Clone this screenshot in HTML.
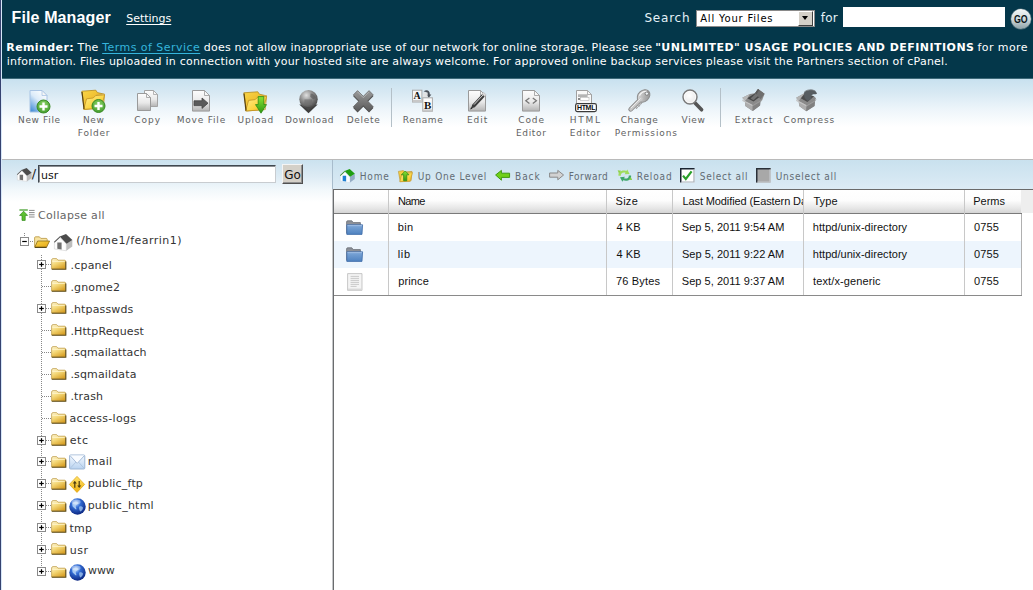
<!DOCTYPE html>
<html>
<head>
<meta charset="utf-8">
<title>File Manager</title>
<style>
html,body{margin:0;padding:0;}
body{width:1033px;height:590px;overflow:hidden;position:relative;background:#fff;font-family:"DejaVu Sans","Liberation Sans",sans-serif;font-size:11px;color:#555;}
.abs{position:absolute;}
.t{position:absolute;white-space:nowrap;line-height:14px;}
.ico{position:absolute;overflow:visible;}
#hdr{left:0;top:0;width:1033px;height:78px;background:#04374a;}
#hdr2{left:0;top:78px;width:1033px;height:1px;background:#3c6878;}
#lb0{left:0;top:0;width:1px;height:590px;background:#364370;}
#lb1{left:1px;top:0;width:1px;height:590px;background:#d6e6f8;}
.title{font-family:"Liberation Sans",sans-serif;font-weight:bold;font-size:16px;color:#fff;line-height:20px;}
.wh{color:#fff;}
.wh a{color:#35b5dc;text-decoration:underline;text-underline-offset:1.500px;}
.wh u{text-underline-offset:2px;}
.s12{font-size:12px;color:#e4f2f8;}
#sel{left:696px;top:10px;width:119px;height:17px;background:#fff;border:1px solid #8a8a8a;box-sizing:border-box;}
#selb{left:798px;top:11px;width:15px;height:15px;background:#d4d0c8;border:1px solid #fff;border-right-color:#404040;border-bottom-color:#404040;box-sizing:border-box;}
#selb:after{content:"";position:absolute;left:3px;top:4px;border:3.500px solid transparent;border-top:4px solid #000;border-bottom:none;}
.selt{font-size:10px;color:#000;}
#sinput{left:843px;top:7px;width:162px;height:20px;background:#fff;}
#gobtn{left:1010.500px;top:9px;width:20px;height:20px;border-radius:10px;background:linear-gradient(#f4f7f7 0%,#cfdadc 50%,#8ea3a9 100%);box-shadow:0 0 0 0.500px #5a7680;}
.go{font-family:"Liberation Sans",sans-serif;font-weight:bold;font-size:11px;color:#0a1418;}
#tb{left:2px;top:79px;width:1031px;height:80px;background:linear-gradient(#c8e1ef 0px,#d8e9f3 14px,#edf5fa 30px,#fff 48px);}
#hline{left:2px;top:159px;width:1031px;height:1px;background:#bababa;}
.tl{font-size:9px;color:#626262;text-align:center;line-height:13px;}
.sep{position:absolute;top:88px;width:1px;height:39px;background:#b4c0c8;}
#lp{left:2px;top:160px;width:331px;height:430px;background:linear-gradient(#cbe2ef 0px,#ddebf4 16px,#f2f8fb 30px,#fff 42px);}
#rp{left:333px;top:160px;width:700px;height:29px;background:linear-gradient(#c9e1ee,#dcebf5);}
.al{font-family:"DejaVu Sans Condensed","DejaVu Sans",sans-serif;font-size:10px;color:#626c74;}
.tr{font-size:11px;color:#333;}
.gr{font-size:11px;color:#666;}
.ar{font-family:"Liberation Sans",sans-serif;font-size:11px;color:#111;}
#pin{left:38px;top:165px;width:238px;height:18px;background:#fff;box-sizing:border-box;border:1px solid #404850;border-right-color:#c8ccd0;border-bottom-color:#c8ccd0;box-shadow:inset 1px 1px 0 #8a8e92;}
#gob{left:282px;top:164px;width:21px;height:20px;background:#d4d0c8;box-sizing:border-box;border:1px solid #f4f4f4;border-right-color:#505050;border-bottom-color:#505050;box-shadow:inset -1px -1px 0 #909090;}
.dotv{position:absolute;width:1px;background-image:linear-gradient(#888 50%,transparent 50%);background-size:1px 2px;}
.doth{position:absolute;height:1px;background-image:linear-gradient(90deg,#888 50%,transparent 50%);background-size:2px 1px;}
</style>
</head>
<body>
<svg width="0" height="0" style="position:absolute"><defs>
<linearGradient id="gPage" x1="0" y1="0" x2="0" y2="1"><stop offset="0" stop-color="#fdfdfd"/><stop offset="0.55" stop-color="#e9e9e9"/><stop offset="1" stop-color="#b4b4b4"/></linearGradient>
<linearGradient id="gBluePage" x1="0.8" y1="0" x2="0.1" y2="1"><stop offset="0" stop-color="#ffffff"/><stop offset="0.45" stop-color="#dcebf9"/><stop offset="1" stop-color="#3f8ad6"/></linearGradient>
<linearGradient id="gFold" x1="0.100" y1="0" x2="0.700" y2="1"><stop offset="0" stop-color="#fdf4cf"/><stop offset="0.450" stop-color="#f4d878"/><stop offset="1" stop-color="#d79f25"/></linearGradient>
<linearGradient id="gFoldB" x1="0" y1="0" x2="1" y2="1"><stop offset="0" stop-color="#f9d648"/><stop offset="1" stop-color="#e6a616"/></linearGradient>
<linearGradient id="gFoldF" x1="0" y1="0" x2="1" y2="1"><stop offset="0" stop-color="#ffee90"/><stop offset="0.600" stop-color="#fbd440"/><stop offset="1" stop-color="#f0b428"/></linearGradient>
<radialGradient id="gGreen" cx="0.5" cy="0.35" r="0.7"><stop offset="0" stop-color="#8fd46a"/><stop offset="1" stop-color="#3d9a28"/></radialGradient>
<linearGradient id="gArrG" x1="0" y1="0" x2="0" y2="1"><stop offset="0" stop-color="#8ae234"/><stop offset="1" stop-color="#2f9a12"/></linearGradient>
<radialGradient id="gSph" cx="0.38" cy="0.28" r="0.8"><stop offset="0" stop-color="#e0e0e0"/><stop offset="0.45" stop-color="#8a8a8a"/><stop offset="1" stop-color="#3c3c3c"/></radialGradient>
<radialGradient id="gGlobe" cx="0.4" cy="0.3" r="0.75"><stop offset="0" stop-color="#c4deff"/><stop offset="0.350" stop-color="#3570d8"/><stop offset="1" stop-color="#08207a"/></radialGradient>
<linearGradient id="gX" x1="0" y1="0" x2="0" y2="1"><stop offset="0" stop-color="#9a9a9a"/><stop offset="1" stop-color="#5a5a5a"/></linearGradient>
<linearGradient id="gKey" x1="0" y1="0" x2="1" y2="1"><stop offset="0" stop-color="#e4e4e4"/><stop offset="1" stop-color="#8c8c8c"/></linearGradient>
<radialGradient id="gLens" cx="0.45" cy="0.4" r="0.7"><stop offset="0" stop-color="#ffffff"/><stop offset="0.7" stop-color="#ececec"/><stop offset="1" stop-color="#c8c8c8"/></radialGradient>
<linearGradient id="gMail" x1="0" y1="0" x2="0" y2="1"><stop offset="0" stop-color="#f4f9ff"/><stop offset="1" stop-color="#b9d3f0"/></linearGradient>
<linearGradient id="gDia" x1="0" y1="0" x2="0" y2="1"><stop offset="0" stop-color="#ffe36a"/><stop offset="1" stop-color="#f0b010"/></linearGradient>
<linearGradient id="gBFold" x1="0" y1="0" x2="0" y2="1"><stop offset="0" stop-color="#7fa8d8"/><stop offset="1" stop-color="#4f82c0"/></linearGradient>
<linearGradient id="gGo" x1="0" y1="0" x2="0" y2="1"><stop offset="0" stop-color="#f2f6f6"/><stop offset="0.5" stop-color="#cdd8da"/><stop offset="1" stop-color="#8fa4aa"/></linearGradient>
</defs></svg>
<div class="abs" id="hdr"></div><div class="abs" id="hdr2"></div>
<div id="title" class="t title" style="left:11.55px;top:8px;letter-spacing:0.117px;">File Manager</div>
<div id="settings" class="t wh" style="left:126.21px;top:12px;letter-spacing:-0.007px;"><u>Settings</u></div>
<div id="searchlbl" class="t s12" style="left:644.4px;top:11px;letter-spacing:0.8px;">Search</div>
<div class="abs" id="sel"></div><div class="abs" id="selb"></div>
<div id="seltxt" class="t selt" style="left:700.18px;top:12px;letter-spacing:0.797px;">All Your Files</div>
<div id="forlbl" class="t s12" style="left:820.8px;top:11px;letter-spacing:0.2px;">for</div>
<div class="abs" id="sinput"></div><div class="abs" id="gobtn"></div>
<div id="gotxt" class="t go" style="left:1013.6px;top:12px;letter-spacing:-0.2px;transform:scaleX(0.8);transform-origin:0 0;">GO</div>
<div id="rem1a" class="t wh" style="left:6.3px;top:41px;letter-spacing:0.395px;"><b>Reminder:</b></div>
<div id="rem1b" class="t wh" style="left:77.61px;top:41px;letter-spacing:0.076px;">The</div>
<div id="rem1c" class="t wh" style="left:102.17px;top:41px;letter-spacing:0.467px;"><a>Terms of Service</a></div>
<div id="rem1d" class="t wh" style="left:203.78px;top:41px;letter-spacing:0.228px;">does not allow inappropriate use of our network for online storage. Please see</div>
<div id="rem1e" class="t wh" style="left:655.16px;top:41px;letter-spacing:0.467px;"><b>"UNLIMITED" USAGE POLICIES AND DEFINITIONS</b></div>
<div id="rem1f" class="t wh" style="left:977.52px;top:41px;letter-spacing:0.417px;">for more</div>
<div id="rem2" class="t wh" style="left:6.77px;top:55px;letter-spacing:0.212px;">information. Files uploaded in connection with your hosted site are always welcome. For approved online backup services please visit the Partners section of cPanel.</div>
<div class="abs" id="tb"></div><div class="abs" id="hline"></div>
<div class="sep" style="left:391px"></div><div class="sep" style="left:720px"></div>
<svg class="ico" style="left:29.4px;top:89.8px" width="24" height="24" viewBox="0 0 24 24"><path d="M1.0 0.5h12l5 5v16.5h-17z" fill="url(#gBluePage)" stroke="#a9c4e4" stroke-width="1"/><path d="M13.0 0.5v5h5z" fill="#f6f6f6" stroke="#a9c4e4" stroke-width="0.8"/><circle cx="14.5" cy="16.5" r="6.5" fill="url(#gGreen)" stroke="#3a8a24" stroke-width="1"/><path d="M10.5 16.5h8M14.5 12.5v8" stroke="#fff" stroke-width="2.4"/></svg>
<div id="tb_newfile_0" class="t tl" style="left:18.03px;top:114px;letter-spacing:0.654px;">New File</div>
<svg class="ico" style="left:80.6px;top:90px" width="26" height="24" viewBox="0 0 26 24"><path d="M0.8 1.2l14 -1l1.6 2.4l7 1.6l-1.4 13.6l-18.6 1.6z" fill="url(#gFoldB)" stroke="#b48a1c" stroke-width="0.8"/><path d="M15 5.2l8.4 -1.2l-1 14l-6 0.6z" fill="#fdf3c4" stroke="#c8a040" stroke-width="0.6"/><path d="M2.6 19.4l3 -10.6l6.6 -0.8l2.4 -2.4l9 -0.8l-3.4 13.4z" fill="url(#gFoldF)" stroke="#c09020" stroke-width="0.8"/><path d="M1 2l2 17" stroke="#5a4410" stroke-width="1.2"/><circle cx="17.5" cy="16" r="6.5" fill="url(#gGreen)" stroke="#3a8a24" stroke-width="1"/><path d="M13.5 16h8M17.5 12v8" stroke="#fff" stroke-width="2.4"/></svg>
<div id="tb_newfolder_0" class="t tl" style="left:83.0px;top:114px;letter-spacing:0.617px;">New</div>
<div id="tb_newfolder_1" class="t tl" style="left:77.86px;top:127px;letter-spacing:0.735px;">Folder</div>
<svg class="ico" style="left:136.8px;top:89.8px" width="22" height="22" viewBox="0 0 22 22"><path d="M7.5 0.5h9l4 4v12h-13z" fill="url(#gPage)" stroke="#a4a4a4" stroke-width="1"/><path d="M16.5 0.5v4h4z" fill="#f6f6f6" stroke="#a4a4a4" stroke-width="0.8"/><path d="M0.5 3.5h9l4 4v13h-13z" fill="url(#gPage)" stroke="#9a9a9a" stroke-width="1"/><path d="M9.5 3.5v4h4z" fill="#f6f6f6" stroke="#9a9a9a" stroke-width="0.8"/></svg>
<div id="tb_copy_0" class="t tl" style="left:134.2px;top:114px;letter-spacing:0.99px;">Copy</div>
<svg class="ico" style="left:191.8px;top:90px" width="19" height="23" viewBox="0 0 19 23"><path d="M0.5 0.5h12l5 5v15.600000000000001h-17z" fill="url(#gPage)" stroke="#9a9a9a" stroke-width="1"/><path d="M12.5 0.5v5h5z" fill="#f6f6f6" stroke="#9a9a9a" stroke-width="0.8"/><path d="M2 10.8h8v-2.8l6 5.2l-6 5.2v-2.8h-8z" fill="#5a5a5a" stroke="#444" stroke-width="0.8"/></svg>
<div id="tb_move_0" class="t tl" style="left:176.68px;top:114px;letter-spacing:0.81px;">Move File</div>
<svg class="ico" style="left:243px;top:90px" width="26" height="24" viewBox="0 -1.6 26 24"><path d="M0.8 1.2l14 -1l1.6 2.4l7 1.6l-1.4 13.6l-18.6 1.6z" fill="url(#gFoldB)" stroke="#b48a1c" stroke-width="0.8"/><path d="M15 5.2l8.4 -1.2l-1 14l-6 0.6z" fill="#fdf3c4" stroke="#c8a040" stroke-width="0.6"/><path d="M2.6 19.4l3 -10.6l6.6 -0.8l2.4 -2.4l9 -0.8l-3.4 13.4z" fill="url(#gFoldF)" stroke="#c09020" stroke-width="0.8"/><path d="M1 2l2 17" stroke="#5a4410" stroke-width="1.2"/><path d="M15.200 5h5.600v8h2.700l-5.500 8.600l-5.500 -8.600h2.700z" fill="url(#gArrG)" stroke="#2c8a14" stroke-width="0.8"/></svg>
<div id="tb_upload_0" class="t tl" style="left:237.61px;top:114px;letter-spacing:0.836px;">Upload</div>
<svg class="ico" style="left:299.2px;top:89.6px" width="19" height="24" viewBox="0 0 19 24"><path d="M0.300 14.600h18.400l-9.200 8.600z" fill="#3e3e3e"/><circle cx="9.500" cy="9.300" r="9.200" fill="url(#gSph)"/><path d="M5.400 9.400h7.600v5.600h-7.600z" fill="#6c6c6c" opacity="0.600"/><path d="M11.600 3.600c2.400 0 4.400 1.600 5.200 4.400l-2.600 1.200l-3 -2.400z" fill="#5c5c5c" opacity="0.700"/><path d="M3.200 14.400c1.800 1.800 4 2.600 6.300 2.600s4.500 -0.800 6.300 -2.600l-6.300 6z" fill="#484848"/></svg>
<div id="tb_download_0" class="t tl" style="left:285.05px;top:114px;letter-spacing:0.515px;">Download</div>
<svg class="ico" style="left:352.6px;top:89.6px" width="21" height="23" viewBox="0 0 20.400 22.400"><path d="M4.400 0.600l5.600 5.600l5.600 -5.600l4.200 4.200l-5.600 5.800l5.600 5.800l-4.200 4.400l-5.600 -5.800l-5.600 5.800l-4.200 -4.400l5.600 -5.800l-5.600 -5.800z" transform="translate(0 1.200)" fill="#4c4c4c"/><path d="M4.400 0.600l5.600 5.600l5.600 -5.600l4.200 4.200l-5.600 5.800l5.600 5.800l-4.200 4.400l-5.600 -5.800l-5.600 5.800l-4.200 -4.400l5.600 -5.800l-5.600 -5.800z" fill="url(#gX)" stroke="#5c5c5c" stroke-width="0.600"/><path d="M4.400 1.800l5.600 5.600l5.600 -5.600" fill="none" stroke="#b4b4b4" stroke-width="0.900"/></svg>
<div id="tb_delete_0" class="t tl" style="left:346.69px;top:114px;letter-spacing:0.691px;">Delete</div>
<svg class="ico" style="left:412.4px;top:89.4px" width="22" height="24" viewBox="0 0 22 24"><rect x="0.5" y="1.2" width="9.4" height="11.8" fill="#f6f6f6" stroke="#a8a8a8"/><path d="M0.5 11h9.4v2h-9.4z" fill="#c8c8c8"/><text x="5.2" y="10.4" font-family="Liberation Serif,serif" font-weight="bold" font-size="10" text-anchor="middle" fill="#111">A</text><path d="M11.6 2.4c3 -2.4 6.6 -1 6.2 3.2l1.6 0l-2.6 3.2l-2.8 -3.2l1.6 0c0.2 -2 -1.6 -3 -4 -3.2z" fill="#4a5058"/><rect x="11" y="3.4" width="4.6" height="5" fill="#e2e2e2" opacity="0.9"/><rect x="10.8" y="8.8" width="9.6" height="13.4" fill="#fbfbfb" stroke="#a8a8a8"/><path d="M10.8 20.4h9.6v1.8h-9.6z" fill="#c8c8c8"/><text x="15.6" y="19.6" font-family="Liberation Serif,serif" font-weight="bold" font-size="11" text-anchor="middle" fill="#111">B</text></svg>
<div id="tb_rename_0" class="t tl" style="left:402.77px;top:114px;letter-spacing:0.62px;">Rename</div>
<svg class="ico" style="left:467.8px;top:90px" width="19" height="23" viewBox="0 0 19 23"><path d="M0.5 0.5h12l5 5v15.600000000000001h-17z" fill="url(#gPage)" stroke="#9a9a9a" stroke-width="1"/><path d="M12.5 0.5v5h5z" fill="#f6f6f6" stroke="#9a9a9a" stroke-width="0.8"/><path d="M3 18.6l1.2 -3.8l10 -10.8l2.6 2.4l-10 10.8z" fill="#3c3c3c"/><path d="M6 14.6l9 -9.6" stroke="#d8d8d8" stroke-width="1"/><path d="M14.2 4l1.4 -1.6l2.6 2.4l-1.4 1.6z" fill="#dcdcdc" stroke="#aaa" stroke-width="0.5"/><path d="M2.2 19.6l0.8 -2.4l1.6 1.4z" fill="#222"/></svg>
<div id="tb_edit_0" class="t tl" style="left:466.99px;top:114px;letter-spacing:0.951px;">Edit</div>
<svg class="ico" style="left:521.8px;top:90px" width="19" height="23" viewBox="0 0 19 23"><path d="M0.5 0.5h12l5 5v15.600000000000001h-17z" fill="url(#gPage)" stroke="#9a9a9a" stroke-width="1"/><path d="M12.5 0.5v5h5z" fill="#f6f6f6" stroke="#9a9a9a" stroke-width="0.8"/><path d="M7.4 8l-3.6 2.8l3.6 2.8M10.8 8l3.6 2.8l-3.6 2.8" fill="none" stroke="#777" stroke-width="1.3"/></svg>
<div id="tb_code_0" class="t tl" style="left:518.32px;top:114px;letter-spacing:0.862px;">Code</div>
<div id="tb_code_1" class="t tl" style="left:515.93px;top:127px;letter-spacing:0.678px;">Editor</div>
<svg class="ico" style="left:575px;top:90px" width="22" height="23" viewBox="0 0 22 23"><path d="M1.5 0.5h11l4 4v12h-15z" fill="#f8f8f8" stroke="#a0a0a0" stroke-width="1"/><path d="M12.5 0.5v4h4z" fill="#f6f6f6" stroke="#a0a0a0" stroke-width="0.8"/><path d="M3 5h9.6M3 6.2h9.6" stroke="#8a8a8a" stroke-width="0.9"/><rect x="3" y="8" width="2" height="2" fill="#888"/><rect x="5.4" y="7.6" width="8.6" height="3" fill="#fff" stroke="#b4b4b4" stroke-width="0.6"/><rect x="0.600" y="13.600" width="20.800" height="8" rx="1.800" fill="#fff" stroke="#3a3a3a" stroke-width="1.200"/><text x="11" y="20.200" font-family="Liberation Sans,sans-serif" font-weight="bold" font-size="7" text-anchor="middle" fill="#0a0a0a" letter-spacing="-0.300">HTML</text></svg>
<div id="tb_html_0" class="t tl" style="left:569.69px;top:114px;letter-spacing:1.723px;">HTML</div>
<div id="tb_html_1" class="t tl" style="left:569.82px;top:127px;letter-spacing:0.762px;">Editor</div>
<svg class="ico" style="left:628.6px;top:89.8px" width="22" height="22" viewBox="0 0 22 22"><path d="M1.600 19.400l10.400 -10.400" stroke="#8c8c8c" stroke-width="4.600" stroke-linecap="round"/><path d="M6.800 16.800l1.400 1.400M9 14.600l1.600 1.600M11 12.600l1.400 1.400" stroke="#8c8c8c" stroke-width="2.200"/><ellipse cx="14.600" cy="6" rx="7" ry="5.400" transform="rotate(-42 14.600 6)" fill="url(#gKey)" stroke="#8a8a8a" stroke-width="1"/><path d="M1.800 19.200l10.400 -10.400" stroke="#c9c9c9" stroke-width="3" stroke-linecap="round"/><path d="M6.800 16.800l1.200 1.200M9 14.600l1.400 1.400M11 12.600l1.200 1.200" stroke="#bcbcbc" stroke-width="1.200"/><path d="M2 18l9.600 -9.600" stroke="#ececec" stroke-width="1"/><path d="M10.400 5.600c1.400 -2.600 4.600 -4.600 7.600 -4.200" fill="none" stroke="#f4f4f4" stroke-width="1.200"/><circle cx="17.800" cy="3.600" r="1.700" fill="#eef2f4" stroke="#7c7c7c" stroke-width="0.900"/></svg>
<div id="tb_chmod_0" class="t tl" style="left:620.72px;top:114px;letter-spacing:0.538px;">Change</div>
<div id="tb_chmod_1" class="t tl" style="left:614.82px;top:127px;letter-spacing:0.897px;">Permissions</div>
<svg class="ico" style="left:682.4px;top:89.4px" width="23" height="23" viewBox="0 0 23 23"><path d="M12.6 13.4l7 7.4" stroke="#555" stroke-width="3.6" stroke-linecap="round"/><circle cx="8" cy="8" r="7" fill="url(#gLens)" stroke="#7a7a7a" stroke-width="1.4"/><circle cx="8" cy="8" r="5.6" fill="none" stroke="#fff" stroke-width="0.8" opacity="0.8"/></svg>
<div id="tb_view_0" class="t tl" style="left:681.5px;top:114px;letter-spacing:0.706px;">View</div>
<svg class="ico" style="left:741.8px;top:89.4px" width="23" height="23" viewBox="0 0 23 23"><path d="M0.300 8.800l7.600 -3.900l5.100 -0.700l3 -4.100l6.600 4.600l-2.500 6.600l-1.800 1l-0.300 4.100l-7.300 5.600l-7.400 -5.100l-0.200 -5.000z" fill="#8a8a8a"/><path d="M5.300 9.300l7.700 -5.100l5.600 3.100l-7.100 5.100z" fill="#474747"/><path d="M13 4.200l3 -4.100l6.600 4.600l-4 5.600z" fill="#6e6e6e"/><path d="M13 4.200l3 -4.100l1.200 0.900l-2.600 4.200z" fill="#595959"/><path d="M8.600 9.600l4.800 -4.800l3 2l-5 4.400z" fill="#777" opacity="0.900"/><path d="M0.300 8.800l7.600 -3.900l-2.600 4.400l-2.300 2.600z" fill="#b9b9b9"/><path d="M3 11.900l7.700 4v6.100l-7.400 -5.100z" fill="#ababab"/><path d="M10.700 15.900l7.900 -4.600l-0.500 5.100l-7.400 5.600z" fill="#828282"/><path d="M0.300 10.400l2.700 1.500l7.700 4l0 1.300l-10.300 -5.300z" fill="#c2c2c2"/><path d="M10.700 15.900l7.900 -4.600l1.600 0.500l-9.500 5.400z" fill="#9a9a9a"/></svg>
<div id="tb_extract_0" class="t tl" style="left:734.81px;top:114px;letter-spacing:0.905px;">Extract</div>
<svg class="ico" style="left:795.9px;top:89.4px" width="22" height="23" viewBox="0 0 22 23"><path d="M0.200 8.800l8.100 -4.600l9.700 3.100l2 2l-1 2l-0.500 5.600l-8.200 5.400l-7.100 -5.400l-0.500 -5z" fill="#8a8a8a"/><path d="M4.700 9.300l4.100 -4.600l9.200 2.600l-6.600 5.600z" fill="#4c4c4c"/><path d="M0.200 8.800l8.100 -4.600l-3.600 5.100l-2 2.600z" fill="#b4b4b4"/><path d="M2.700 11.900l7.900 4.300l-0.300 6.100l-7.100 -5.400z" fill="#adadad"/><path d="M10.600 16.200l8.400 -4.900l-0.500 5.600l-8.200 5.400z" fill="#808080"/><path d="M0.200 10.300l2.500 1.600l7.900 4.300v1.300l-10.400 -5.600z" fill="#c4c4c4"/><path d="M10.600 16.200l8.400 -4.900l1 -1.400l0.400 0.600l-1.400 2l-8.400 5z" fill="#9c9c9c"/><path d="M8.800 9.200c-0.800 -2 -1 -4.200 -0.500 -6.200c1.600 -1.400 3.200 -2 5.100 -2.100c2.400 -0.200 4.600 0.300 6.100 1.300c0.800 0.800 1.300 1.600 1.500 2.500c-1.200 0.500 -2.400 0.600 -3.600 0.500c-0.800 0.200 -1.500 0.600 -2 1.100l0 3.500l-3.800 2.200z" fill="#575d61"/><path d="M8.300 3c1.600 -1.400 3.200 -2 5.100 -2.100c2.400 -0.200 4.600 0.300 6.100 1.300" fill="none" stroke="#7a8084" stroke-width="0.800"/></svg>
<div id="tb_compress_0" class="t tl" style="left:783.62px;top:114px;letter-spacing:0.829px;">Compress</div>
<div class="abs" id="lp"></div>
<div class="abs" id="lb0"></div><div class="abs" id="lb1"></div>
<svg class="ico" style="left:17.4px;top:167.6px" width="14.72" height="13.6" viewBox="0 0 18.400 17"><path d="M5.700 3.300l-5.300 5v6.700l11.900 1.800v-7z" fill="#fdfdfd" stroke="#c8c8c8" stroke-width="0.500"/><path d="M12.400 9.600l5.900 -3.500v6.300l-5.900 4.400z" fill="#bdbdbd"/><path d="M5.700 2.500l6.300 -2.500l6.400 5.900l-5.900 3.800z" fill="#4c4c4c"/><path d="M5.900 2.300l-5.900 5.500l0.500 0.900l5.600 -5.200z" fill="#5a5a5a"/><path d="M3.300 8.400h4.300v7l-4.300 -0.600z" fill="#707070"/></svg>
<div id="slash" class="t tr" style="left:31.8px;top:166px;letter-spacing:0px;font-size:13px;color:#222;line-height:16px;">/</div>
<div class="abs" id="pin"></div><div class="abs" id="gob"></div>
<div id="pintxt" class="t tr" style="left:41px;top:169px;letter-spacing:0px;color:#111;">usr</div>
<div id="gobtxt" class="t tr" style="left:284.3px;top:168px;letter-spacing:0px;color:#111;font-size:12px;">Go</div>
<svg class="ico" style="left:18.6px;top:208.6px" width="16" height="12" viewBox="0 0 16 12"><path d="M0.400 1h8.400" stroke="#3a9a20" stroke-width="1.200"/><path d="M4.600 2.200l4 4.200h-2.400v5h-3.200v-5h-2.400z" fill="#5cc030" stroke="#2f8a18" stroke-width="0.700"/><path d="M10 1.400h5.600M10 3.600h5.600M10 5.800h5.600M10 8h5.600" stroke="#8a8a8a" stroke-width="1"/></svg>
<div id="collapse" class="t gr" style="left:38.05px;top:209px;letter-spacing:0.314px;">Collapse all</div>
<div class="dotv" style="left:24px;top:233px;height:4px"></div>
<div class="doth" style="left:30px;top:241px;width:4px"></div>
<svg class="ico" style="left:20px;top:237px" width="9" height="9" viewBox="0 0 9 9"><rect x="0.500" y="0.500" width="8" height="8" fill="#fff" stroke="#8a8a8a" stroke-width="1"/><path d="M2.200 4.500h4.600" stroke="#000" stroke-width="1.200"/></svg>
<svg class="ico" style="left:33.8px;top:236px" width="16.4" height="12" viewBox="0 0 16.4 12"><path d="M0.600 10.800v-9c0 -0.600 0.400 -1 1 -1h3.800l1.400 1.600h5.400c0.600 0 1 0.400 1 1v2" fill="#f7e3a0" stroke="#b8943c" stroke-width="0.8"/><path d="M0.800 11.200l2.800 -6.200h12l-3 6.200z" fill="url(#gFoldB)" stroke="#8a6a18" stroke-width="0.8"/><path d="M0.800 11.400h11.800" stroke="#4e3e10" stroke-width="1"/></svg>
<svg class="ico" style="left:53.9px;top:233.9px" width="18.4" height="17.0" viewBox="0 0 18.400 17"><path d="M5.700 3.300l-5.300 5v6.700l11.900 1.800v-7z" fill="#fdfdfd" stroke="#c8c8c8" stroke-width="0.500"/><path d="M12.400 9.600l5.900 -3.500v6.300l-5.900 4.400z" fill="#bdbdbd"/><path d="M5.700 2.500l6.300 -2.500l6.400 5.900l-5.900 3.800z" fill="#4c4c4c"/><path d="M5.900 2.300l-5.900 5.500l0.500 0.900l5.600 -5.200z" fill="#5a5a5a"/><path d="M3.300 8.400h4.300v7l-4.300 -0.600z" fill="#707070"/></svg>
<div id="root" class="t tr" style="left:76.33px;top:233.5px;letter-spacing:0.489px;">(/home1/fearrin1)</div>
<div class="dotv" style="left:41px;top:255px;height:316px"></div>
<div class="doth" style="left:42px;top:264px;width:9px"></div>
<svg class="ico" style="left:37px;top:260px" width="9" height="9" viewBox="0 0 9 9"><rect x="0.500" y="0.500" width="8" height="8" fill="#fff" stroke="#8a8a8a" stroke-width="1"/><path d="M2.200 4.500h4.600" stroke="#000" stroke-width="1.200"/><path d="M4.500 2.200v4.600" stroke="#000" stroke-width="1.200"/></svg>
<svg class="ico" style="left:50.6px;top:258px" width="16" height="12" viewBox="0 0 16 12"><path d="M0.6 2.000c0 -0.800 0.600 -1.400 1.400 -1.400h3.600l1.400 1.600h6.600c0.600 0 1 0.400 1 1v7.800h-14z" fill="url(#gFold)" stroke="#b8943c" stroke-width="0.7"/><path d="M0.800 11.200h14v-7.600" fill="none" stroke="#5f4e1c" stroke-width="1.1"/><path d="M1.300 3.400h12.400" stroke="#fff6d0" stroke-width="0.8"/></svg>
<div id="tr0" class="t tr" style="left:70.6px;top:259px;letter-spacing:0.189px;">.cpanel</div>
<div class="doth" style="left:42px;top:286px;width:9px"></div>
<svg class="ico" style="left:50.6px;top:280px" width="16" height="12" viewBox="0 0 16 12"><path d="M0.6 2.000c0 -0.800 0.600 -1.400 1.400 -1.400h3.600l1.400 1.600h6.600c0.600 0 1 0.400 1 1v7.800h-14z" fill="url(#gFold)" stroke="#b8943c" stroke-width="0.7"/><path d="M0.800 11.200h14v-7.600" fill="none" stroke="#5f4e1c" stroke-width="1.1"/><path d="M1.300 3.400h12.400" stroke="#fff6d0" stroke-width="0.8"/></svg>
<div id="tr1" class="t tr" style="left:70.4px;top:281px;letter-spacing:0.151px;">.gnome2</div>
<div class="doth" style="left:42px;top:308px;width:9px"></div>
<svg class="ico" style="left:37px;top:304px" width="9" height="9" viewBox="0 0 9 9"><rect x="0.500" y="0.500" width="8" height="8" fill="#fff" stroke="#8a8a8a" stroke-width="1"/><path d="M2.200 4.500h4.600" stroke="#000" stroke-width="1.200"/><path d="M4.500 2.200v4.600" stroke="#000" stroke-width="1.200"/></svg>
<svg class="ico" style="left:50.6px;top:302px" width="16" height="12" viewBox="0 0 16 12"><path d="M0.6 2.000c0 -0.800 0.600 -1.400 1.400 -1.400h3.600l1.400 1.600h6.600c0.600 0 1 0.400 1 1v7.800h-14z" fill="url(#gFold)" stroke="#b8943c" stroke-width="0.7"/><path d="M0.800 11.200h14v-7.600" fill="none" stroke="#5f4e1c" stroke-width="1.1"/><path d="M1.300 3.400h12.400" stroke="#fff6d0" stroke-width="0.8"/></svg>
<div id="tr2" class="t tr" style="left:70.39px;top:303px;letter-spacing:0.131px;">.htpasswds</div>
<div class="doth" style="left:42px;top:330px;width:9px"></div>
<svg class="ico" style="left:50.6px;top:324px" width="16" height="12" viewBox="0 0 16 12"><path d="M0.6 2.000c0 -0.800 0.600 -1.400 1.400 -1.400h3.600l1.400 1.600h6.600c0.600 0 1 0.400 1 1v7.800h-14z" fill="url(#gFold)" stroke="#b8943c" stroke-width="0.7"/><path d="M0.800 11.200h14v-7.600" fill="none" stroke="#5f4e1c" stroke-width="1.1"/><path d="M1.300 3.400h12.400" stroke="#fff6d0" stroke-width="0.8"/></svg>
<div id="tr3" class="t tr" style="left:70.4px;top:325px;letter-spacing:0.125px;">.HttpRequest</div>
<div class="doth" style="left:42px;top:352px;width:9px"></div>
<svg class="ico" style="left:50.6px;top:346px" width="16" height="12" viewBox="0 0 16 12"><path d="M0.6 2.000c0 -0.800 0.600 -1.400 1.400 -1.400h3.600l1.400 1.600h6.600c0.600 0 1 0.400 1 1v7.800h-14z" fill="url(#gFold)" stroke="#b8943c" stroke-width="0.7"/><path d="M0.800 11.200h14v-7.600" fill="none" stroke="#5f4e1c" stroke-width="1.1"/><path d="M1.300 3.400h12.400" stroke="#fff6d0" stroke-width="0.8"/></svg>
<div id="tr4" class="t tr" style="left:70.6px;top:346px;letter-spacing:0.088px;">.sqmailattach</div>
<div class="doth" style="left:42px;top:374px;width:9px"></div>
<svg class="ico" style="left:50.6px;top:368px" width="16" height="12" viewBox="0 0 16 12"><path d="M0.6 2.000c0 -0.800 0.600 -1.400 1.400 -1.400h3.600l1.400 1.600h6.600c0.600 0 1 0.400 1 1v7.800h-14z" fill="url(#gFold)" stroke="#b8943c" stroke-width="0.7"/><path d="M0.800 11.200h14v-7.600" fill="none" stroke="#5f4e1c" stroke-width="1.1"/><path d="M1.300 3.400h12.400" stroke="#fff6d0" stroke-width="0.8"/></svg>
<div id="tr5" class="t tr" style="left:70.39px;top:368px;letter-spacing:0.151px;">.sqmaildata</div>
<div class="doth" style="left:42px;top:396px;width:9px"></div>
<svg class="ico" style="left:50.6px;top:390px" width="16" height="12" viewBox="0 0 16 12"><path d="M0.6 2.000c0 -0.800 0.600 -1.400 1.400 -1.400h3.600l1.400 1.600h6.600c0.600 0 1 0.400 1 1v7.800h-14z" fill="url(#gFold)" stroke="#b8943c" stroke-width="0.7"/><path d="M0.800 11.200h14v-7.600" fill="none" stroke="#5f4e1c" stroke-width="1.1"/><path d="M1.300 3.400h12.400" stroke="#fff6d0" stroke-width="0.8"/></svg>
<div id="tr6" class="t tr" style="left:70.48px;top:390px;letter-spacing:0.156px;">.trash</div>
<div class="doth" style="left:42px;top:418px;width:9px"></div>
<svg class="ico" style="left:50.6px;top:412px" width="16" height="12" viewBox="0 0 16 12"><path d="M0.6 2.000c0 -0.800 0.600 -1.400 1.400 -1.400h3.600l1.400 1.600h6.600c0.600 0 1 0.400 1 1v7.800h-14z" fill="url(#gFold)" stroke="#b8943c" stroke-width="0.7"/><path d="M0.800 11.200h14v-7.600" fill="none" stroke="#5f4e1c" stroke-width="1.1"/><path d="M1.300 3.400h12.400" stroke="#fff6d0" stroke-width="0.8"/></svg>
<div id="tr7" class="t tr" style="left:69.6px;top:412px;letter-spacing:0.281px;">access-logs</div>
<div class="doth" style="left:42px;top:440px;width:9px"></div>
<svg class="ico" style="left:37px;top:436px" width="9" height="9" viewBox="0 0 9 9"><rect x="0.500" y="0.500" width="8" height="8" fill="#fff" stroke="#8a8a8a" stroke-width="1"/><path d="M2.200 4.500h4.600" stroke="#000" stroke-width="1.200"/><path d="M4.500 2.200v4.600" stroke="#000" stroke-width="1.200"/></svg>
<svg class="ico" style="left:50.6px;top:434px" width="16" height="12" viewBox="0 0 16 12"><path d="M0.6 2.000c0 -0.800 0.600 -1.400 1.400 -1.400h3.600l1.400 1.600h6.600c0.600 0 1 0.400 1 1v7.800h-14z" fill="url(#gFold)" stroke="#b8943c" stroke-width="0.7"/><path d="M0.800 11.200h14v-7.600" fill="none" stroke="#5f4e1c" stroke-width="1.1"/><path d="M1.300 3.400h12.400" stroke="#fff6d0" stroke-width="0.8"/></svg>
<div id="tr8" class="t tr" style="left:69.8px;top:434px;letter-spacing:0.506px;">etc</div>
<div class="doth" style="left:42px;top:461px;width:9px"></div>
<svg class="ico" style="left:37px;top:457px" width="9" height="9" viewBox="0 0 9 9"><rect x="0.500" y="0.500" width="8" height="8" fill="#fff" stroke="#8a8a8a" stroke-width="1"/><path d="M2.200 4.500h4.600" stroke="#000" stroke-width="1.200"/><path d="M4.500 2.200v4.600" stroke="#000" stroke-width="1.200"/></svg>
<svg class="ico" style="left:50.6px;top:456px" width="16" height="12" viewBox="0 0 16 12"><path d="M0.6 2.000c0 -0.800 0.600 -1.400 1.400 -1.400h3.600l1.400 1.600h6.600c0.600 0 1 0.400 1 1v7.800h-14z" fill="url(#gFold)" stroke="#b8943c" stroke-width="0.7"/><path d="M0.800 11.200h14v-7.600" fill="none" stroke="#5f4e1c" stroke-width="1.1"/><path d="M1.300 3.400h12.400" stroke="#fff6d0" stroke-width="0.8"/></svg>
<svg class="ico" style="left:69px;top:454.2px" width="16.4" height="16" viewBox="0 0 16.4 16"><rect x="0.600" y="1" width="15.200" height="14" rx="1" fill="url(#gMail)" stroke="#9db6d4" stroke-width="1"/><path d="M1 14.600l6 -6.600M15.400 14.600l-6 -6.600" stroke="#a9c0dc" stroke-width="0.800"/><path d="M1 1.600l7.200 7.800l7.200 -7.800" fill="#fafcff" stroke="#a0b8d6" stroke-width="0.900"/></svg>
<div id="tr9" class="t tr" style="left:87.79px;top:455px;letter-spacing:0.275px;">mail</div>
<div class="doth" style="left:42px;top:483px;width:9px"></div>
<svg class="ico" style="left:37px;top:479px" width="9" height="9" viewBox="0 0 9 9"><rect x="0.500" y="0.500" width="8" height="8" fill="#fff" stroke="#8a8a8a" stroke-width="1"/><path d="M2.200 4.500h4.600" stroke="#000" stroke-width="1.200"/><path d="M4.500 2.200v4.600" stroke="#000" stroke-width="1.200"/></svg>
<svg class="ico" style="left:50.6px;top:478px" width="16" height="12" viewBox="0 0 16 12"><path d="M0.6 2.000c0 -0.800 0.600 -1.400 1.400 -1.400h3.600l1.400 1.600h6.600c0.600 0 1 0.400 1 1v7.800h-14z" fill="url(#gFold)" stroke="#b8943c" stroke-width="0.7"/><path d="M0.800 11.200h14v-7.600" fill="none" stroke="#5f4e1c" stroke-width="1.1"/><path d="M1.300 3.400h12.400" stroke="#fff6d0" stroke-width="0.8"/></svg>
<svg class="ico" style="left:69px;top:476.2px" width="16" height="17" viewBox="0 0 16 17"><path d="M8 0.400l7.600 8l-7.600 8l-7.600 -8z" fill="url(#gDia)" stroke="#e0a818" stroke-width="0.800"/><path d="M5.800 4.800l-2 2.600h1.400v4.400h1.200v-4.400h1.400zM10.200 12l-2 -2.600h1.400v-4.400h1.200v4.400h1.400z" fill="#4a3a10"/></svg>
<div id="tr10" class="t tr" style="left:87.66px;top:477px;letter-spacing:0.181px;">public_ftp</div>
<div class="doth" style="left:42px;top:505px;width:9px"></div>
<svg class="ico" style="left:37px;top:501px" width="9" height="9" viewBox="0 0 9 9"><rect x="0.500" y="0.500" width="8" height="8" fill="#fff" stroke="#8a8a8a" stroke-width="1"/><path d="M2.200 4.500h4.600" stroke="#000" stroke-width="1.200"/><path d="M4.500 2.200v4.600" stroke="#000" stroke-width="1.200"/></svg>
<svg class="ico" style="left:50.6px;top:500px" width="16" height="12" viewBox="0 0 16 12"><path d="M0.6 2.000c0 -0.800 0.600 -1.400 1.400 -1.400h3.600l1.400 1.600h6.600c0.600 0 1 0.400 1 1v7.800h-14z" fill="url(#gFold)" stroke="#b8943c" stroke-width="0.7"/><path d="M0.800 11.200h14v-7.600" fill="none" stroke="#5f4e1c" stroke-width="1.1"/><path d="M1.300 3.400h12.400" stroke="#fff6d0" stroke-width="0.8"/></svg>
<svg class="ico" style="left:69px;top:497.5px" width="17" height="17" viewBox="0 0 17 17"><circle cx="8.500" cy="8.500" r="8.200" fill="url(#gGlobe)"/><path d="M4 4.600c2 -1.600 4.400 -1 5.600 0.200c-0.600 1.600 -2.200 1.600 -2.800 3c-0.400 1.400 1.200 2.400 0.400 3.800c-1.400 -0.400 -2 -2 -3.400 -2.800c-0.800 -1.600 -0.600 -3.200 0.200 -4.200z" fill="#bcd8f8" opacity="0.800"/><path d="M10.400 8.600c1.400 -0.600 3 0 3.600 1.200c-0.200 1.800 -1.400 3.200 -2.800 3.800c-0.800 -1.400 -1.600 -3.400 -0.800 -5z" fill="#a8ccf4" opacity="0.750"/><ellipse cx="7" cy="4" rx="4.600" ry="2.400" fill="#fff" opacity="0.350"/></svg>
<div id="tr11" class="t tr" style="left:87.67px;top:499px;letter-spacing:0.232px;">public_html</div>
<div class="doth" style="left:42px;top:527px;width:9px"></div>
<svg class="ico" style="left:37px;top:523px" width="9" height="9" viewBox="0 0 9 9"><rect x="0.500" y="0.500" width="8" height="8" fill="#fff" stroke="#8a8a8a" stroke-width="1"/><path d="M2.200 4.500h4.600" stroke="#000" stroke-width="1.200"/><path d="M4.500 2.200v4.600" stroke="#000" stroke-width="1.200"/></svg>
<svg class="ico" style="left:50.6px;top:521px" width="16" height="12" viewBox="0 0 16 12"><path d="M0.6 2.000c0 -0.800 0.600 -1.400 1.400 -1.400h3.600l1.400 1.600h6.600c0.600 0 1 0.400 1 1v7.800h-14z" fill="url(#gFold)" stroke="#b8943c" stroke-width="0.7"/><path d="M0.800 11.200h14v-7.600" fill="none" stroke="#5f4e1c" stroke-width="1.1"/><path d="M1.300 3.400h12.400" stroke="#fff6d0" stroke-width="0.8"/></svg>
<div id="tr12" class="t tr" style="left:69.51px;top:522px;letter-spacing:0.195px;">tmp</div>
<div class="doth" style="left:42px;top:549px;width:9px"></div>
<svg class="ico" style="left:37px;top:545px" width="9" height="9" viewBox="0 0 9 9"><rect x="0.500" y="0.500" width="8" height="8" fill="#fff" stroke="#8a8a8a" stroke-width="1"/><path d="M2.200 4.500h4.600" stroke="#000" stroke-width="1.200"/><path d="M4.500 2.200v4.600" stroke="#000" stroke-width="1.200"/></svg>
<svg class="ico" style="left:50.6px;top:543px" width="16" height="12" viewBox="0 0 16 12"><path d="M0.6 2.000c0 -0.800 0.600 -1.400 1.400 -1.400h3.600l1.400 1.600h6.600c0.600 0 1 0.400 1 1v7.800h-14z" fill="url(#gFold)" stroke="#b8943c" stroke-width="0.7"/><path d="M0.800 11.200h14v-7.600" fill="none" stroke="#5f4e1c" stroke-width="1.1"/><path d="M1.300 3.400h12.400" stroke="#fff6d0" stroke-width="0.8"/></svg>
<div id="tr13" class="t tr" style="left:69.83px;top:544px;letter-spacing:0.523px;">usr</div>
<div class="doth" style="left:42px;top:571px;width:9px"></div>
<svg class="ico" style="left:37px;top:567px" width="9" height="9" viewBox="0 0 9 9"><rect x="0.500" y="0.500" width="8" height="8" fill="#fff" stroke="#8a8a8a" stroke-width="1"/><path d="M2.200 4.500h4.600" stroke="#000" stroke-width="1.200"/><path d="M4.500 2.200v4.600" stroke="#000" stroke-width="1.200"/></svg>
<svg class="ico" style="left:50.6px;top:566px" width="16" height="12" viewBox="0 0 16 12"><path d="M0.6 2.000c0 -0.800 0.600 -1.400 1.400 -1.400h3.600l1.400 1.600h6.600c0.600 0 1 0.400 1 1v7.800h-14z" fill="url(#gFold)" stroke="#b8943c" stroke-width="0.7"/><path d="M0.800 11.200h14v-7.600" fill="none" stroke="#5f4e1c" stroke-width="1.1"/><path d="M1.300 3.400h12.400" stroke="#fff6d0" stroke-width="0.8"/></svg>
<svg class="ico" style="left:69px;top:563.5px" width="17" height="17" viewBox="0 0 17 17"><circle cx="8.500" cy="8.500" r="8.200" fill="url(#gGlobe)"/><path d="M4 4.600c2 -1.600 4.400 -1 5.600 0.200c-0.600 1.600 -2.200 1.600 -2.800 3c-0.400 1.400 1.200 2.400 0.400 3.800c-1.400 -0.400 -2 -2 -3.400 -2.800c-0.800 -1.600 -0.600 -3.200 0.200 -4.200z" fill="#bcd8f8" opacity="0.800"/><path d="M10.400 8.600c1.400 -0.600 3 0 3.600 1.200c-0.200 1.800 -1.400 3.200 -2.800 3.800c-0.800 -1.400 -1.600 -3.400 -0.800 -5z" fill="#a8ccf4" opacity="0.750"/><ellipse cx="7" cy="4" rx="4.600" ry="2.400" fill="#fff" opacity="0.350"/></svg>
<div id="tr14" class="t tr" style="left:88.03px;top:564px;letter-spacing:-0.109px;">www</div>
<div class="abs" id="rp"></div>
<div class="abs" style="left:332px;top:160px;width:1px;height:29px;background:#a8bccc"></div>
<svg class="ico" style="left:340.1px;top:168.7px" width="14.9" height="13.77" viewBox="0 0 18.400 17"><path d="M5.700 3.300l-5.300 5v6.700l11.900 1.800v-7z" fill="#fbfdff" stroke="#c4d4e4" stroke-width="0.500"/><path d="M12.400 9.600l5.900 -3.500v6.300l-5.900 4.400z" fill="#93abc4"/><path d="M5.700 2.500l6.300 -2.500l6.400 5.900l-5.900 3.800z" fill="#1f9e12"/><path d="M5.900 2.300l-5.900 5.500l0.500 0.900l5.600 -5.200z" fill="#3a8a2a"/><path d="M3.300 8.400h4.300v7l-4.300 -0.600z" fill="#1f80d2"/></svg>
<div id="a_home" class="t al" style="left:359.69px;top:169.5px;letter-spacing:0.836px;">Home</div>
<svg class="ico" style="left:397.8px;top:169.8px" width="15" height="12.4" viewBox="0 0 15 12.4"><path d="M0.400 1.400l5 -0.800l1 1.400l7.600 -0.600l-1 9l-10.800 1.200z" fill="url(#gFoldB)" stroke="#b8902c" stroke-width="0.600"/><path d="M9 2.600l5 -0.600l-1 9l-3.600 0.400z" fill="#fbeeb4" stroke="#c8a040" stroke-width="0.500"/><path d="M1.800 11.800l1.800 -7l3.400 -0.400l1.200 -1.200l6.200 -0.600l-2.200 8.600z" fill="url(#gFoldF)" stroke="#c09020" stroke-width="0.600"/><path d="M7.200 1l3.800 3.800h-2.200v6h-3.200v-6h-2.200z" fill="url(#gArrG)" stroke="#2c8a14" stroke-width="0.700"/></svg>
<div id="a_up" class="t al" style="left:417.74px;top:169.5px;letter-spacing:0.776px;">Up One Level</div>
<svg class="ico" style="left:494.8px;top:170.4px" width="15.4" height="10.4" viewBox="0 0 15.4 10.4"><path d="M0.600 5l5.800 -4.600v2.800h8.200v4.200h-8.200v2.800z" fill="#6fd018" stroke="#3f9a10" stroke-width="1" stroke-linejoin="round"/></svg>
<div id="a_back" class="t al" style="left:515.1px;top:169.5px;letter-spacing:0.908px;">Back</div>
<svg class="ico" style="left:548.6px;top:170px" width="15.4" height="10.4" viewBox="0 0 15.4 10.4"><path d="M14.600 5l-5.800 -4.600v2.600h-8.200v4.200h8.200v2.600z" fill="#d2d2d2" stroke="#8a8a8a" stroke-width="1" stroke-linejoin="round"/></svg>
<div id="a_fwd" class="t al" style="left:568.65px;top:169.5px;letter-spacing:0.505px;">Forward</div>
<svg class="ico" style="left:617.2px;top:169.4px" width="15.6" height="13.2" viewBox="0 0 14.600 12.400"><path d="M1.400 6.400c-0.600 -3.400 3 -6 7.400 -4.600l0.800 -1.400l2.200 4.200l-4.600 0.400l0.800 -1.400c-2.800 -0.800 -4.800 0.600 -4.400 2.800z" fill="#9fdc5c"/><path d="M0.600 1.200l3.200 0.400l-2 2.600z" fill="#8fd048"/><path d="M13.200 6c0.600 3.400 -3 6 -7.400 4.600l-0.800 1.400l-2.200 -4.200l4.600 -0.400l-0.800 1.400c2.800 0.800 4.800 -0.600 4.400 -2.800z" fill="#3fa66c"/><path d="M14.200 10.400l-3.200 -0.200l2 -2.600z" fill="#7fcf40"/></svg>
<div id="a_reload" class="t al" style="left:636.78px;top:169.5px;letter-spacing:0.861px;">Reload</div>
<svg class="ico" style="left:680.1px;top:168.3px" width="14.6" height="14.6" viewBox="0 0 14.6 14.6"><rect x="0" y="0" width="14.600" height="14.600" fill="#fff"/><path d="M0.750 14.600v-13.850h13.850" fill="none" stroke="#1a2430" stroke-width="1.500"/><path d="M14 1.400v12.600h-12.600" fill="none" stroke="#a8b0b8" stroke-width="1.200"/><path d="M3 7.600l2.800 3.400l5.800 -7.600" fill="none" stroke="#2aa02a" stroke-width="2.200"/></svg>
<div id="a_sel" class="t al" style="left:699.85px;top:169.5px;letter-spacing:0.716px;">Select all</div>
<svg class="ico" style="left:756.2px;top:168.3px" width="14.6" height="14.6" viewBox="0 0 14.6 14.6"><rect x="0" y="0" width="14.600" height="14.600" fill="#a8a8a8"/><path d="M0.750 14.600v-13.850h13.850" fill="none" stroke="#2a3038" stroke-width="1.500"/><path d="M14 1.400v12.600h-12.600" fill="none" stroke="#c4c8cc" stroke-width="1.200"/></svg>
<div id="a_unsel" class="t al" style="left:775.74px;top:169.5px;letter-spacing:0.744px;">Unselect all</div>
<div class="abs" style="left:333px;top:189px;width:700px;height:1px;background:#6a6a6a"></div>
<div class="abs" style="left:333px;top:190px;width:700px;height:23px;background:#eee"></div>
<div class="abs" style="left:334px;top:190px;width:687px;height:23px;background:linear-gradient(#fff 0%,#fdfdfd 45%,#e6e6e6 80%,#d4d4d4 100%)"></div>
<div class="abs" style="left:334px;top:213px;width:688px;height:1px;background:#7a7a7a"></div>
<div class="abs" style="left:334px;top:214px;width:687px;height:27px;background:#fff"></div>
<div class="abs" style="left:334px;top:241px;width:687px;height:26.500px;background:#edf5fd"></div>
<div class="abs" style="left:334px;top:295px;width:688px;height:1px;background:#8a8a8a"></div>
<div class="abs" style="left:333px;top:189px;width:1px;height:401px;background:#6a6c6e"></div><div class="abs" style="left:332px;top:189px;width:1px;height:401px;background:#c4c6c8"></div>
<div class="abs" style="left:387.5px;top:190px;width:1px;height:105px;background:#c8c8c8"></div>
<div class="abs" style="left:606.0px;top:190px;width:1px;height:105px;background:#c8c8c8"></div>
<div class="abs" style="left:672.0px;top:190px;width:1px;height:105px;background:#c8c8c8"></div>
<div class="abs" style="left:803.0px;top:190px;width:1px;height:105px;background:#c8c8c8"></div>
<div class="abs" style="left:964.2px;top:190px;width:1px;height:105px;background:#c8c8c8"></div>
<div class="abs" style="left:1021px;top:214px;width:1px;height:81px;background:#b0b0b0"></div>
<div id="h_name" class="t ar" style="left:398.0px;top:194px;letter-spacing:-0.638px;">Name</div>
<div id="h_size" class="t ar" style="left:615.51px;top:194px;letter-spacing:0.29px;">Size</div>
<div class="abs" style="left:673px;top:190px;width:130px;height:23px;overflow:hidden"><div id="h_mod" class="t ar" style="left:9.500px;top:4px;letter-spacing:-0.110px;">Last Modified (Eastern Daylight Time)</div></div>
<div id="h_type" class="t ar" style="left:813.38px;top:194px;letter-spacing:0.126px;">Type</div>
<div id="h_perms" class="t ar" style="left:973.31px;top:194px;letter-spacing:-0.014px;">Perms</div>
<svg class="ico" style="left:345.5px;top:220px" width="17.4" height="15.4" viewBox="0 0 17.4 15.4"><path d="M0.600 13.400v-11.400c0 -0.800 0.400 -1.200 1.200 -1.200h4l1.400 1.800h7.200v3" fill="#8c9098" stroke="#6a6e76" stroke-width="0.800"/><path d="M0.800 14.400l0 -9.600h15.800l-0.600 9.600z" fill="url(#gBFold)" stroke="#3f6ca8" stroke-width="0.800"/><path d="M1.400 5.600h14.600" stroke="#a8c4e8" stroke-width="0.800"/></svg>
<div id="c0_0" class="t ar" style="left:397.87px;top:220px;letter-spacing:0.253px;">bin</div>
<div id="c0_1" class="t ar" style="left:616.56px;top:220px;letter-spacing:0.031px;">4 KB</div>
<div id="c0_2" class="t ar" style="left:681.86px;top:220px;letter-spacing:0.028px;">Sep 5, 2011 9:54 AM</div>
<div id="c0_3" class="t ar" style="left:812.79px;top:220px;letter-spacing:0.04px;">httpd/unix-directory</div>
<div id="c0_4" class="t ar" style="left:974.05px;top:220px;letter-spacing:0.126px;">0755</div>
<svg class="ico" style="left:345.5px;top:246.8px" width="17.4" height="15.4" viewBox="0 0 17.4 15.4"><path d="M0.600 13.400v-11.400c0 -0.800 0.400 -1.200 1.200 -1.200h4l1.400 1.800h7.200v3" fill="#8c9098" stroke="#6a6e76" stroke-width="0.800"/><path d="M0.800 14.400l0 -9.600h15.800l-0.600 9.600z" fill="url(#gBFold)" stroke="#3f6ca8" stroke-width="0.800"/><path d="M1.400 5.600h14.600" stroke="#a8c4e8" stroke-width="0.800"/></svg>
<div id="c1_0" class="t ar" style="left:397.73px;top:247px;letter-spacing:0.646px;">lib</div>
<div id="c1_1" class="t ar" style="left:616.59px;top:247px;letter-spacing:0.032px;">4 KB</div>
<div id="c1_2" class="t ar" style="left:682.0px;top:247px;letter-spacing:0.018px;">Sep 5, 2011 9:22 AM</div>
<div id="c1_3" class="t ar" style="left:812.82px;top:247px;letter-spacing:0.038px;">httpd/unix-directory</div>
<div id="c1_4" class="t ar" style="left:973.93px;top:247px;letter-spacing:0.173px;">0755</div>
<svg class="ico" style="left:346.5px;top:272.8px" width="15.6" height="18" viewBox="0 0 15.6 18"><path d="M0.600 0.600h14.400v16.800h-14.400z" fill="#f4f4f4" stroke="#c2c2c2" stroke-width="0.900"/><path d="M1 15.600h14v1.800h-14z" fill="#d8d8d8"/><path d="M3.600 3.400h8.400M3.600 5.400h8.400M3.600 7.400h8.400M3.600 9.400h8.400M3.600 11.400h8.400M3.600 13.400h6" stroke="#c4c4c4" stroke-width="0.900"/></svg>
<div id="c2_0" class="t ar" style="left:398.19px;top:274px;letter-spacing:0.136px;">prince</div>
<div id="c2_1" class="t ar" style="left:616.08px;top:274px;letter-spacing:0.148px;">76 Bytes</div>
<div id="c2_2" class="t ar" style="left:681.86px;top:274px;letter-spacing:0.028px;">Sep 5, 2011 9:37 AM</div>
<div id="c2_3" class="t ar" style="left:813.12px;top:274px;letter-spacing:0.111px;">text/x-generic</div>
<div id="c2_4" class="t ar" style="left:974.05px;top:274px;letter-spacing:0.126px;">0755</div>
</body>
</html>
